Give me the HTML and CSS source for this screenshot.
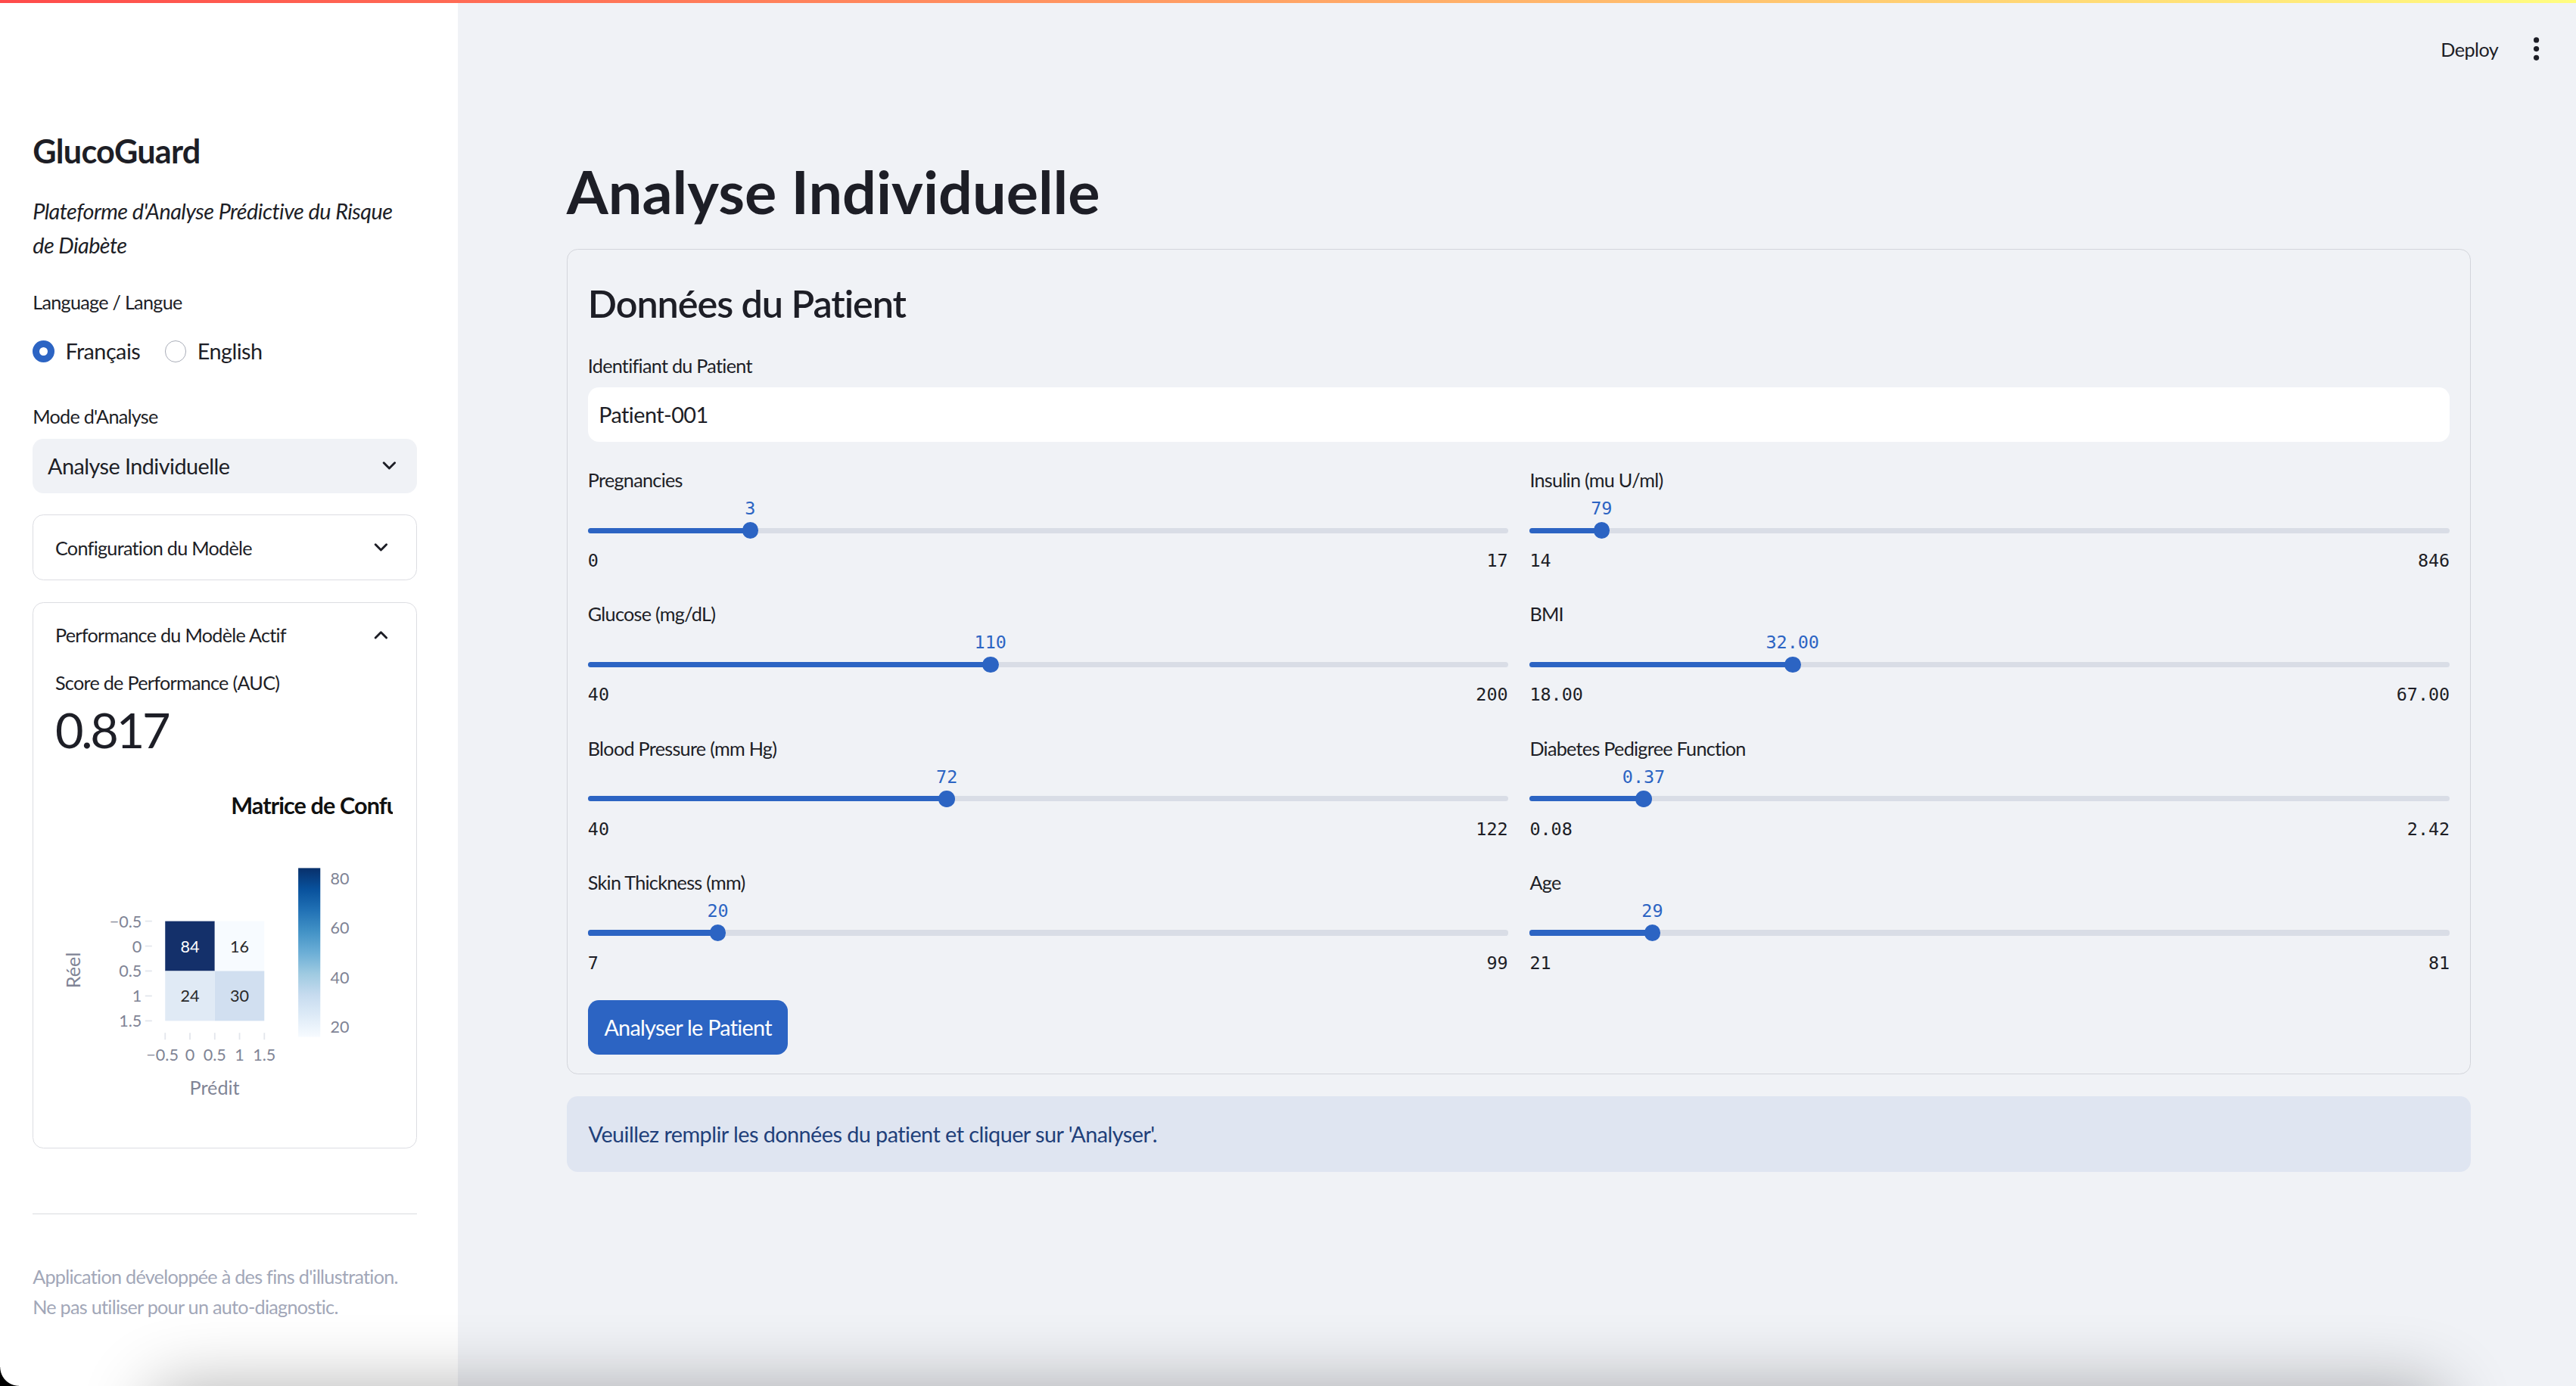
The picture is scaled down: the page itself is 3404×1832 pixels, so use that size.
FILE: index.html
```html
<!DOCTYPE html>
<html lang="fr">
<head>
<meta charset="utf-8">
<title>GlucoGuard</title>
<link rel="stylesheet" href="styles.css">
</head>
<body>
<div class="app">
  <div class="decoration"></div>

  <aside class="sidebar">
    <h1 class="brand">GlucoGuard</h1>
    <p class="tagline">Plateforme d'Analyse Prédictive du Risque de Diabète</p>

    <div class="field-label lang-label">Language / Langue</div>
    <div class="radio-group">
      <label class="radio checked"><span class="radio-dot"></span>Français</label>
      <label class="radio"><span class="radio-dot"></span>English</label>
    </div>

    <div class="field-label mode-label">Mode d'Analyse</div>
    <div class="select">
      <span>Analyse Individuelle</span>
      <svg class="chev" viewBox="0 0 24 24"><path d="M6 9l6 6 6-6"/></svg>
    </div>

    <div class="expander">
      <div class="exp-head">
        <span>Configuration du Modèle</span>
        <svg class="chev" viewBox="0 0 24 24"><path d="M6 9l6 6 6-6"/></svg>
      </div>
    </div>

    <div class="expander">
      <div class="exp-head">
        <span>Performance du Modèle Actif</span>
        <svg class="chev" viewBox="0 0 24 24"><path d="M6 15l6-6 6 6"/></svg>
      </div>
      <div class="exp-body">
        <div class="metric-label">Score de Performance (AUC)</div>
        <div class="metric-value">0.817</div>
        <svg class="cm" width="248" height="268" viewBox="0 0 248 268">
          <defs>
            <linearGradient id="blues" x1="0" y1="0" x2="0" y2="1">
              <stop offset="0" stop-color="#08306b"/>
              <stop offset="0.125" stop-color="#08519c"/>
              <stop offset="0.25" stop-color="#2171b5"/>
              <stop offset="0.375" stop-color="#4292c6"/>
              <stop offset="0.5" stop-color="#6baed6"/>
              <stop offset="0.625" stop-color="#9ecae1"/>
              <stop offset="0.75" stop-color="#c6dbef"/>
              <stop offset="0.875" stop-color="#deebf7"/>
              <stop offset="1" stop-color="#f7fbff"/>
            </linearGradient>
          </defs>
          <text class="cm-title" x="129" y="32">Matrice de Confusion</text>

          <rect x="80.7" y="117" width="36.4" height="36.6" fill="#14306a"/>
          <rect x="117.1" y="117" width="36.4" height="36.6" fill="#f7fbff"/>
          <rect x="80.7" y="153.6" width="36.4" height="36.6" fill="#e0eaf5"/>
          <rect x="117.1" y="153.6" width="36.4" height="36.6" fill="#d1dff0"/>
          <text class="cm-cell light" x="98.9" y="135.3">84</text>
          <text class="cm-cell" x="135.3" y="135.3">16</text>
          <text class="cm-cell" x="98.9" y="171.9">24</text>
          <text class="cm-cell" x="135.3" y="171.9">30</text>

          <g class="cm-ticks">
            <line x1="66" y1="117" x2="71" y2="117"/>
            <line x1="66" y1="135.3" x2="71" y2="135.3"/>
            <line x1="66" y1="153.6" x2="71" y2="153.6"/>
            <line x1="66" y1="171.9" x2="71" y2="171.9"/>
            <line x1="66" y1="190.2" x2="71" y2="190.2"/>
            <line x1="80.7" y1="199" x2="80.7" y2="204"/>
            <line x1="98.9" y1="199" x2="98.9" y2="204"/>
            <line x1="117.1" y1="199" x2="117.1" y2="204"/>
            <line x1="135.3" y1="199" x2="135.3" y2="204"/>
            <line x1="153.5" y1="199" x2="153.5" y2="204"/>
          </g>
          <g class="cm-ylab">
            <text x="63.5" y="117">−0.5</text>
            <text x="63.5" y="135.3">0</text>
            <text x="63.5" y="153.6">0.5</text>
            <text x="63.5" y="171.9">1</text>
            <text x="63.5" y="190.2">1.5</text>
          </g>
          <g class="cm-xlab">
            <text x="78.7" y="215">−0.5</text>
            <text x="98.9" y="215">0</text>
            <text x="117.1" y="215">0.5</text>
            <text x="135.3" y="215">1</text>
            <text x="153.5" y="215">1.5</text>
          </g>
          <text class="cm-axis" x="117" y="239">Prédit</text>
          <text class="cm-axis" x="13" y="153" transform="rotate(-90 13 153)">Réel</text>

          <rect x="178.4" y="78" width="16.2" height="124" fill="url(#blues)"/>
          <g class="cm-cbar">
            <text x="202" y="85.3">80</text>
            <text x="202" y="121.8">60</text>
            <text x="202" y="158.2">40</text>
            <text x="202" y="194.7">20</text>
          </g>
        </svg>
      </div>
    </div>

    <hr class="divider">
    <p class="caption">Application développée à des fins d'illustration.<br>Ne pas utiliser pour un auto-diagnostic.</p>
  </aside>

  <main class="main">
    <header class="topbar">
      <span class="deploy">Deploy</span>
      <svg class="kebab" viewBox="0 0 24 24"><circle cx="12" cy="5.5" r="2"/><circle cx="12" cy="12" r="2"/><circle cx="12" cy="18.5" r="2"/></svg>
    </header>

    <section class="content">
      <h1 class="page-title">Analyse Individuelle</h1>

      <div class="card">
        <h3 class="card-title">Données du Patient</h3>
        <div class="field-label id-label">Identifiant du Patient</div>
        <div class="text-input">Patient-001</div>

        <div class="slider-grid">
          <div class="col">
            <div class="slider" style="--p:17.65%">
              <div class="field-label">Pregnancies</div>
              <div class="slider-area"><div class="track"><div class="fill"></div></div><div class="thumb"><span class="thumb-value">3</span></div></div>
              <div class="ticks"><span>0</span><span>17</span></div>
            </div>
            <div class="slider" style="--p:43.75%">
              <div class="field-label">Glucose (mg/dL)</div>
              <div class="slider-area"><div class="track"><div class="fill"></div></div><div class="thumb"><span class="thumb-value">110</span></div></div>
              <div class="ticks"><span>40</span><span>200</span></div>
            </div>
            <div class="slider" style="--p:39.02%">
              <div class="field-label">Blood Pressure (mm Hg)</div>
              <div class="slider-area"><div class="track"><div class="fill"></div></div><div class="thumb"><span class="thumb-value">72</span></div></div>
              <div class="ticks"><span>40</span><span>122</span></div>
            </div>
            <div class="slider" style="--p:14.13%">
              <div class="field-label">Skin Thickness (mm)</div>
              <div class="slider-area"><div class="track"><div class="fill"></div></div><div class="thumb"><span class="thumb-value">20</span></div></div>
              <div class="ticks"><span>7</span><span>99</span></div>
            </div>
          </div>
          <div class="col">
            <div class="slider" style="--p:7.81%">
              <div class="field-label">Insulin (mu U/ml)</div>
              <div class="slider-area"><div class="track"><div class="fill"></div></div><div class="thumb"><span class="thumb-value">79</span></div></div>
              <div class="ticks"><span>14</span><span>846</span></div>
            </div>
            <div class="slider" style="--p:28.57%">
              <div class="field-label">BMI</div>
              <div class="slider-area"><div class="track"><div class="fill"></div></div><div class="thumb"><span class="thumb-value">32.00</span></div></div>
              <div class="ticks"><span>18.00</span><span>67.00</span></div>
            </div>
            <div class="slider" style="--p:12.39%">
              <div class="field-label">Diabetes Pedigree Function</div>
              <div class="slider-area"><div class="track"><div class="fill"></div></div><div class="thumb"><span class="thumb-value">0.37</span></div></div>
              <div class="ticks"><span>0.08</span><span>2.42</span></div>
            </div>
            <div class="slider" style="--p:13.33%">
              <div class="field-label">Age</div>
              <div class="slider-area"><div class="track"><div class="fill"></div></div><div class="thumb"><span class="thumb-value">29</span></div></div>
              <div class="ticks"><span>21</span><span>81</span></div>
            </div>
          </div>
        </div>

        <button class="btn" type="button">Analyser le Patient</button>
      </div>

      <div class="info">Veuillez remplir les données du patient et cliquer sur 'Analyser'.</div>
    </section>
  </main>

  <div class="bottom-shadow"></div>
  <div class="corner"></div>
</div>
</body>
</html>
```

FILE: styles.css
```css
* { box-sizing: border-box; }

html, body {
  margin: 0;
  padding: 0;
  background: #f0f2f6;
  overflow: hidden;
}

body {
  font-family: Lato, "Liberation Sans", sans-serif;
  color: #1d1e26;
  letter-spacing: -0.3px;
}

.app {
  zoom: 1.8;
  width: 1891px;
  height: 1018px;
  display: flex;
  position: relative;
  overflow: hidden;
  background: #f0f2f6;
}

.decoration {
  position: absolute;
  top: 0;
  left: 0;
  right: 0;
  height: 2px;
  background: linear-gradient(90deg, #ff4b4b, #fffd80);
  z-index: 5;
}

/* ---------- Sidebar ---------- */
.sidebar {
  width: 336px;
  flex: none;
  background: #ffffff;
  padding: 96px 30px 0 24px;
}

.brand {
  margin: 0;
  font-size: 24px;
  line-height: 29px;
  font-weight: 700;
  letter-spacing: -0.4px;
}

.tagline {
  margin: 18px 0 0;
  font-style: italic;
  font-size: 16px;
  line-height: 25px;
}

.field-label {
  font-size: 14px;
  line-height: 24px;
  height: 24px;
  letter-spacing: -0.4px;
}

.lang-label { margin-top: 17px; }
.mode-label { margin-top: 24px; }

.radio-group {
  display: flex;
  align-items: center;
  gap: 18px;
  height: 24px;
  margin-top: 12px;
  font-size: 16px;
}

.radio {
  display: flex;
  align-items: center;
  gap: 8px;
}

.radio-dot {
  width: 16px;
  height: 16px;
  border-radius: 50%;
  border: 1px solid #a9adb8;
  background: #fff;
}

.radio.checked .radio-dot {
  border: 5px solid #2c64c3;
}

.select {
  margin-top: 4px;
  height: 40px;
  background: #f0f2f6;
  border-radius: 8px;
  padding: 0 12px 0 11px;
  display: flex;
  align-items: center;
  justify-content: space-between;
  font-size: 16px;
}

.chev {
  width: 16px;
  height: 16px;
  fill: none;
  stroke: #1d1e26;
  stroke-width: 2.4;
  stroke-linecap: round;
  stroke-linejoin: round;
}

.expander {
  margin-top: 16px;
  border: 1px solid #dcdde2;
  border-radius: 8px;
}

.exp-head {
  height: 47px;
  padding: 0 18px 0 16px;
  display: flex;
  align-items: center;
  justify-content: space-between;
  font-size: 14px;
  letter-spacing: -0.4px;
}

.exp-body {
  padding: 0 16px 15px;
}

.metric-label {
  font-size: 14px;
  line-height: 24px;
  letter-spacing: -0.4px;
}

.metric-value {
  font-size: 36px;
  line-height: 44px;
  letter-spacing: -1.8px;
}

.cm {
  display: block;
  margin-top: 2px;
  overflow: hidden;
  letter-spacing: 0;
}

.cm-title {
  font-size: 17px;
  font-weight: 700;
  fill: #111;
  letter-spacing: -0.5px;
  dominant-baseline: central;
}

.cm-cell {
  font-size: 12px;
  fill: #2a2a2a;
  text-anchor: middle;
  dominant-baseline: central;
}

.cm-cell.light { fill: #ffffff; }

.cm-ticks line {
  stroke: #e3e6ec;
  stroke-width: 1;
}

.cm-ylab text {
  font-size: 12px;
  fill: #808495;
  text-anchor: end;
  dominant-baseline: central;
}

.cm-xlab text {
  font-size: 12px;
  fill: #808495;
  text-anchor: middle;
  dominant-baseline: central;
}

.cm-axis {
  font-size: 14px;
  fill: #808495;
  text-anchor: middle;
  dominant-baseline: central;
}

.cm-cbar text {
  font-size: 12px;
  fill: #808495;
  dominant-baseline: central;
}

.divider {
  margin: 48px 0 0;
  border: 0;
  border-top: 1px solid #d9dbe0;
  height: 0;
}

.caption {
  margin: 35px 0 0;
  font-size: 14px;
  line-height: 22px;
  color: #a2a7b8;
  letter-spacing: -0.4px;
}

/* ---------- Main ---------- */
.main {
  flex: 1;
  display: flex;
  flex-direction: column;
  min-width: 0;
}

.topbar {
  height: 72px;
  flex: none;
  display: flex;
  justify-content: flex-end;
  align-items: center;
  gap: 16px;
  padding-right: 17px;
  font-size: 14px;
}

.deploy { color: #1d1e26; }

.kebab {
  width: 24px;
  height: 24px;
  fill: #1d1e26;
}

.content {
  padding: 0 77px 0 80px;
}

.page-title {
  margin: 42px 0 16px;
  font-size: 44px;
  line-height: 53px;
  font-weight: 700;
  letter-spacing: 0;
}

.card {
  border: 1px solid #d3d5db;
  border-radius: 8px;
  padding: 15px 15px 14px;
}

.card-title {
  margin: 7px 0 0;
  font-size: 28px;
  line-height: 34px;
  font-weight: 600;
  letter-spacing: -0.6px;
}

.id-label {
  margin-top: 17px;
  margin-bottom: 4px;
}

.text-input {
  height: 40px;
  background: #ffffff;
  border-radius: 8px;
  padding: 0 8px;
  display: flex;
  align-items: center;
  font-size: 16px;
}

.slider-grid {
  margin-top: 16px;
  display: grid;
  grid-template-columns: 1fr 1fr;
  column-gap: 16px;
}

.col {
  display: flex;
  flex-direction: column;
  gap: 16px;
}

.slider { height: 82.5px; }

.slider-area {
  position: relative;
  height: 34.5px;
}

.track {
  position: absolute;
  top: 23px;
  left: 0;
  right: 0;
  height: 4px;
  border-radius: 2px;
  background: #d9dde6;
}

.fill {
  width: var(--p);
  height: 100%;
  border-radius: 2px;
  background: #2c64c3;
}

.thumb {
  position: absolute;
  top: 19px;
  left: var(--p);
  width: 12px;
  height: 12px;
  margin-left: -6px;
  border-radius: 50%;
  background: #2c64c3;
}

.thumb-value {
  position: absolute;
  top: -19px;
  left: 50%;
  transform: translateX(-50%);
  font-family: "DejaVu Sans Mono", "Liberation Mono", monospace;
  font-size: 13px;
  line-height: 18px;
  letter-spacing: 0;
  color: #2c64c3;
  white-space: nowrap;
}

.ticks {
  display: flex;
  justify-content: space-between;
  margin-top: 1px;
  font-family: "DejaVu Sans Mono", "Liberation Mono", monospace;
  font-size: 13px;
  line-height: 24px;
  letter-spacing: 0;
}

.btn {
  display: block;
  margin-top: 16px;
  height: 40px;
  padding: 0 12px;
  border: 0;
  border-radius: 8px;
  background: #2c64c3;
  color: #ffffff;
  font-family: Lato, "Liberation Sans", sans-serif;
  font-size: 16px;
  letter-spacing: -0.4px;
}

.info {
  margin-top: 16px;
  padding: 15px 16px;
  border-radius: 8px;
  background: #dfe5f1;
  color: #21407a;
  font-size: 16px;
  line-height: 25.6px;
}

/* ---------- Window chrome ---------- */
.bottom-shadow {
  position: absolute;
  left: 110px;
  right: 96px;
  top: 1018px;
  height: 60px;
  border-radius: 20px;
  box-shadow: 0 0 50px rgba(0, 0, 0, 0.3);
  z-index: 4;
}

.corner {
  position: absolute;
  left: 0;
  bottom: 0;
  width: 14px;
  height: 14px;
  background: radial-gradient(circle at 100% 0, transparent 13.5px, #000 14px);
  z-index: 6;
}
```
